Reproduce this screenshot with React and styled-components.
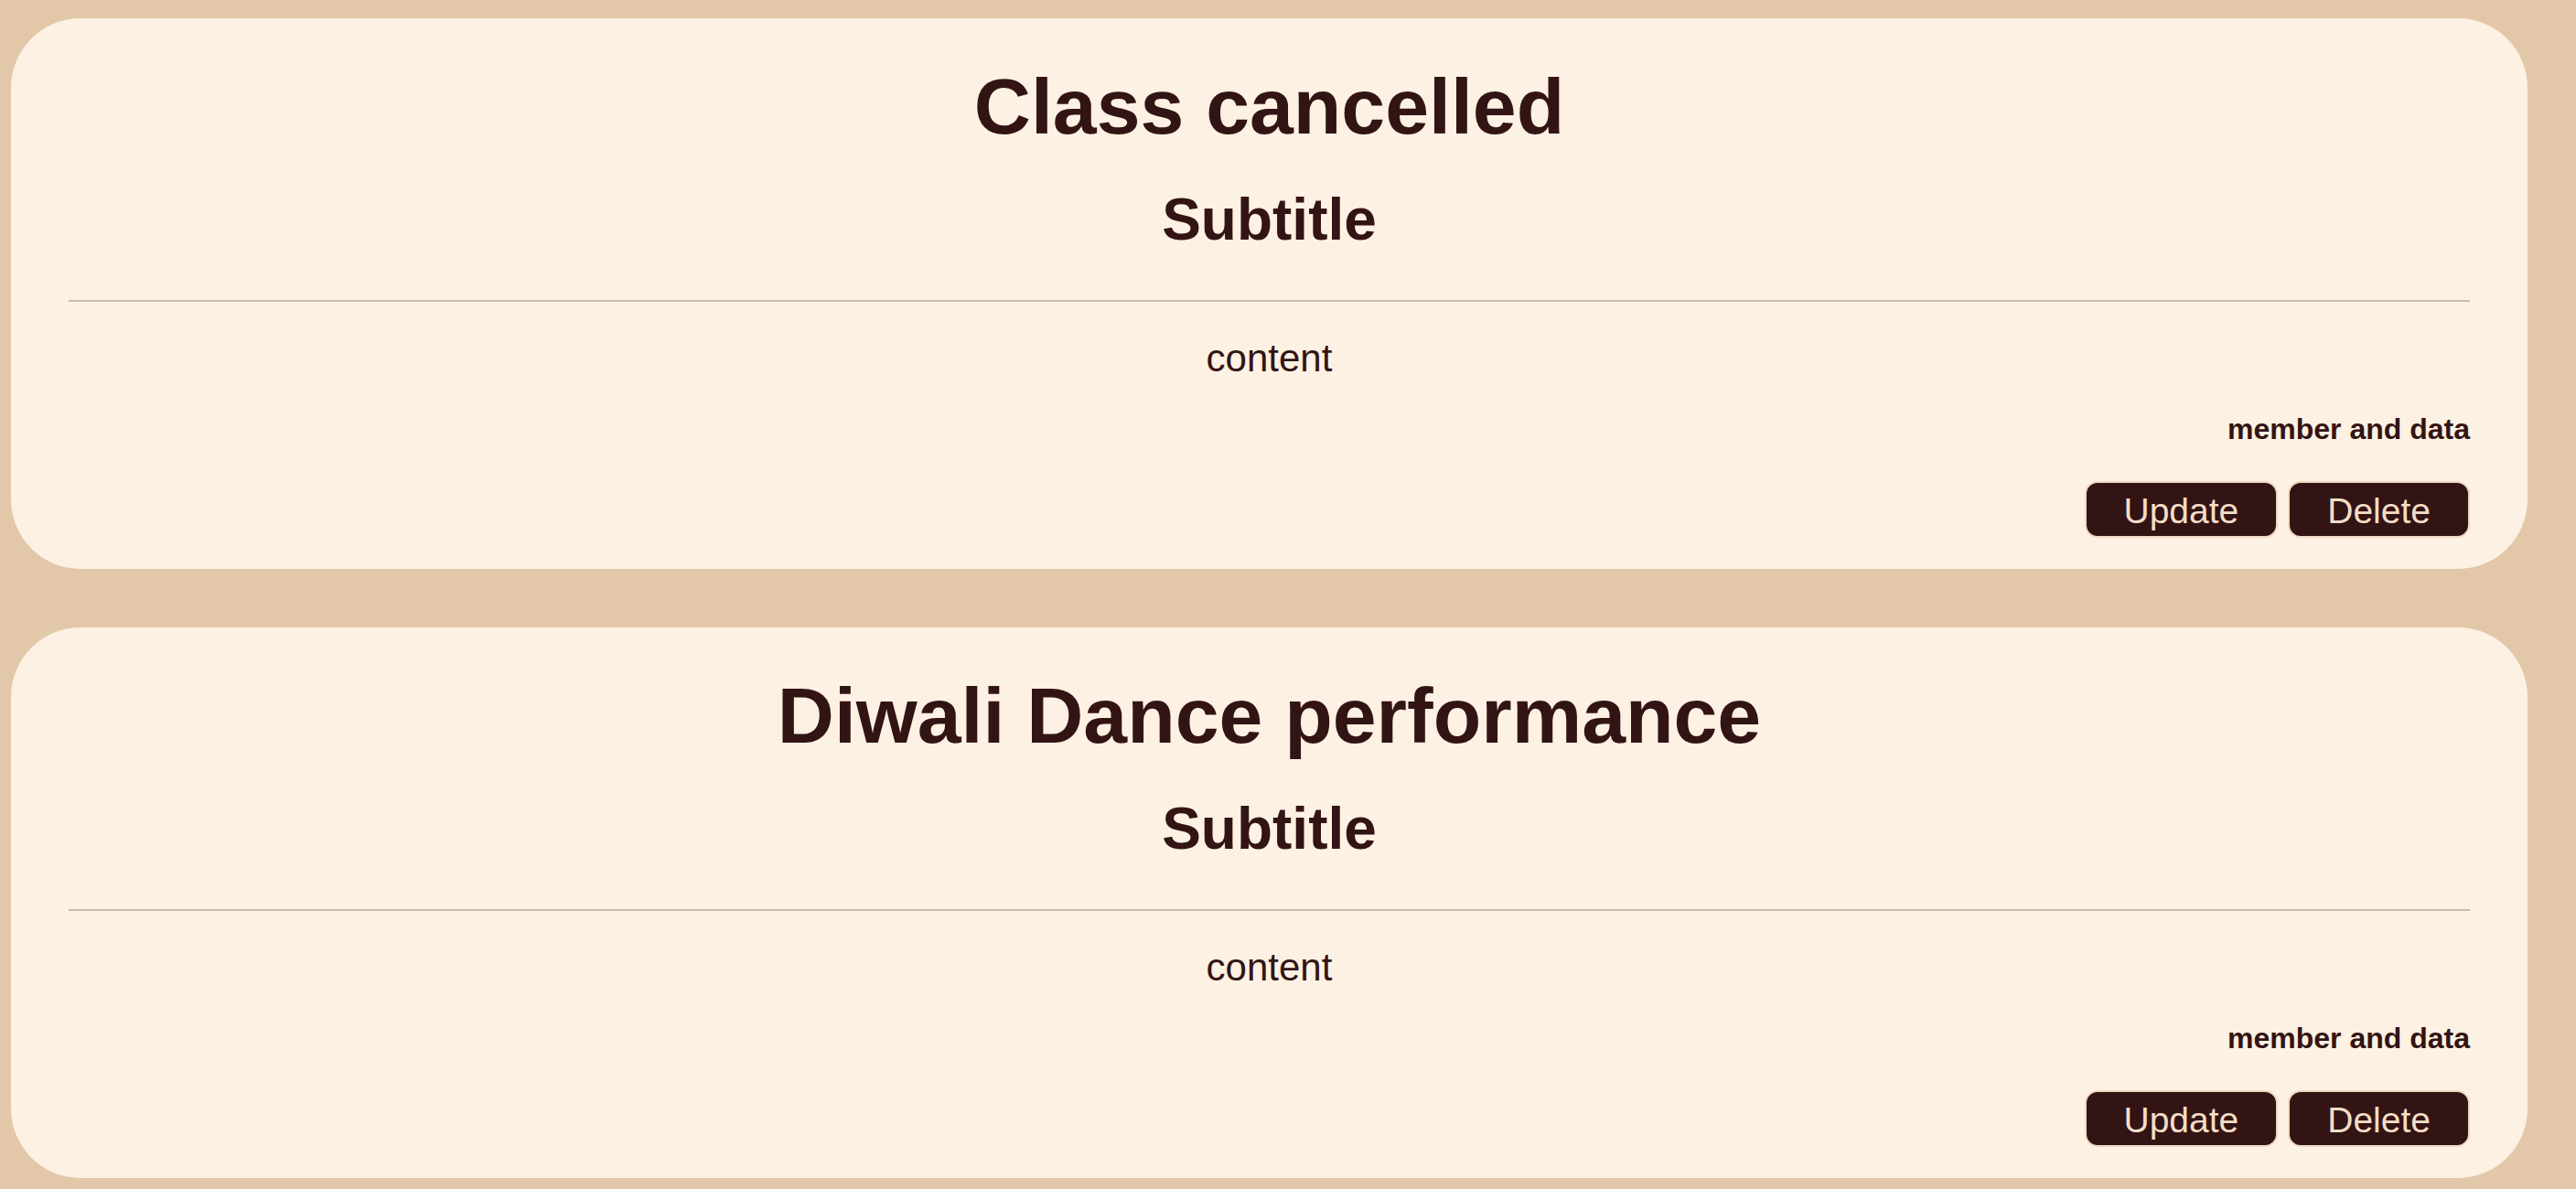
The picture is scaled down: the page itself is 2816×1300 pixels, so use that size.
import React from "react";
import styled, { createGlobalStyle } from "styled-components";

const GlobalStyle = createGlobalStyle`
  html, body {
    margin: 0;
    padding: 0;
    background: #e2c7a9;
  }
  body {
    font-family: "Liberation Sans", Arial, Helvetica, sans-serif;
    color: #331414;
  }
`;

const Page = styled.main`
  display: flex;
  flex-direction: column;
  gap: 64px;
  padding: 20px 53px 12px 12px;
  min-height: 1300px;
  box-sizing: border-box;
`;

const Card = styled.article`
  background: #fdf1e3;
  border-radius: 76px;
  height: 602px;
  box-sizing: border-box;
  padding: 46px 63px 34px;
  display: flex;
  flex-direction: column;
`;

const Title = styled.h1`
  margin: 0;
  font-size: 86px;
  line-height: 100px;
  font-weight: 700;
  text-align: center;
  color: #331414;
`;

const Subtitle = styled.h2`
  margin: 36px 0 0;
  font-size: 64px;
  line-height: 76px;
  font-weight: 700;
  text-align: center;
  color: #331414;
`;

const Divider = styled.hr`
  margin: 50px 0 0;
  border: none;
  height: 2px;
  background: #c6bdb3;
`;

const Content = styled.p`
  margin: 38px 0 0;
  font-size: 42px;
  line-height: 48px;
  text-align: center;
`;

const Meta = styled.p`
  margin: 35px 0 0;
  font-size: 32px;
  line-height: 37px;
  font-weight: 700;
  text-align: right;
`;

const Actions = styled.div`
  margin-top: 38px;
  display: flex;
  justify-content: flex-end;
  gap: 11px;
`;

const ActionButton = styled.button`
  height: 62px;
  padding: 2px 41px 0;
  border: 2px solid #efd9c1;
  border-radius: 14px;
  background: #331414;
  color: #f3dec6;
  font-family: "Liberation Sans", Arial, Helvetica, sans-serif;
  font-size: 39px;
  line-height: 39px;
  display: flex;
  align-items: center;
  box-sizing: border-box;
  cursor: pointer;
`;

const posts = [
  { title: "Class cancelled" },
  { title: "Diwali Dance performance" },
];

function PostCard({ title }) {
  return (
    <Card>
      <Title>{title}</Title>
      <Subtitle>Subtitle</Subtitle>
      <Divider />
      <Content>content</Content>
      <Meta>member and data</Meta>
      <Actions>
        <ActionButton>Update</ActionButton>
        <ActionButton>Delete</ActionButton>
      </Actions>
    </Card>
  );
}

export default function App() {
  return (
    <>
      <GlobalStyle />
      <Page>
        {posts.map((p) => (
          <PostCard key={p.title} title={p.title} />
        ))}
      </Page>
    </>
  );
}
